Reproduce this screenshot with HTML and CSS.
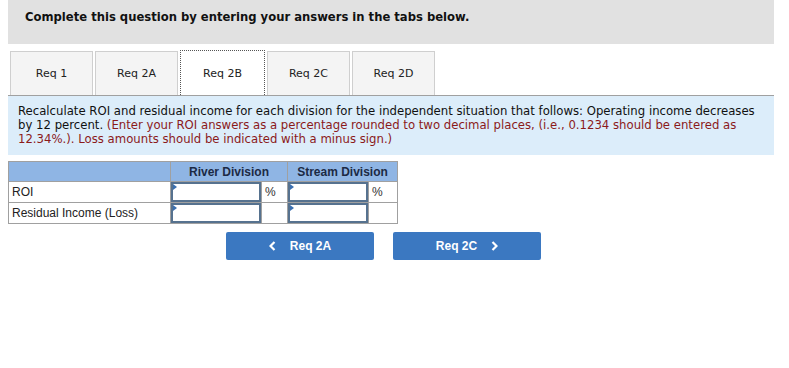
FILE: index.html
```html
<!DOCTYPE html>
<html lang="en">
<head>
    <meta charset="UTF-8">
    <meta name="viewport" content="width=device-width, initial-scale=1.0">
    <title>Req 2B</title>
    <link rel="stylesheet" href="styles.css">
</head>
<body>

    <!-- Question header -->
    <div class="question-header">Complete this question by entering your answers in the tabs below.</div>

    <!-- Requirement tabs -->
    <div class="tabs">
        <div class="tab">Req 1</div>
        <div class="tab">Req 2A</div>
        <div class="tab active">Req 2B</div>
        <div class="tab">Req 2C</div>
        <div class="tab">Req 2D</div>
    </div>

    <!-- Instructions -->
    <div class="instructions">
        Recalculate ROI and residual income for each division for the independent situation that follows: Operating income decreases by 12 percent. <span class="note">(Enter your ROI answers as a percentage rounded to two decimal places, (i.e., 0.1234 should be entered as 12.34%.). Loss amounts should be indicated with a minus sign.)</span>
    </div>

    <!-- Answer table -->
    <table class="answer-table">
        <tr class="head">
            <th class="label-col"></th>
            <th colspan="2">River Division</th>
            <th colspan="2">Stream Division</th>
        </tr>
        <tr>
            <td class="label-col">ROI</td>
            <td class="input-cell river"><input type="text"></td>
            <td class="unit">%</td>
            <td class="input-cell stream"><input type="text"></td>
            <td class="unit last">%</td>
        </tr>
        <tr>
            <td class="label-col">Residual Income (Loss)</td>
            <td class="input-cell river"><input type="text"></td>
            <td class="unit"></td>
            <td class="input-cell stream"><input type="text"></td>
            <td class="unit last"></td>
        </tr>
    </table>

    <!-- Navigation buttons -->
    <div class="nav-buttons">
        <a href="#" class="nav-btn">
            <svg class="chev" width="7" height="10" viewBox="0 0 7 10"><polyline points="5.5,1 1.5,5 5.5,9" fill="none" stroke="#fff" stroke-width="2.2"/></svg>
            Req 2A
        </a>
        <a href="#" class="nav-btn">
            Req 2C
            <svg class="chev" width="7" height="10" viewBox="0 0 7 10"><polyline points="1.5,1 5.5,5 1.5,9" fill="none" stroke="#fff" stroke-width="2.2"/></svg>
        </a>
    </div>

</body>
</html>
```

FILE: styles.css
```css
/* Reset */
* {
    margin: 0;
    padding: 0;
    box-sizing: border-box;
}

body {
    margin: 0 8px;
    width: 766px;
    font-family: 'DejaVu Sans', Verdana, sans-serif;
    background: #ffffff;
    color: #000000;
}

/* Gray header box */
.question-header {
    height: 44px;
    background: #e1e1e1;
    padding: 10px 0 0 17px;
    font-size: 11.6px;
    font-weight: bold;
    color: #111;
}

/* Tabs */
.tabs {
    display: flex;
    gap: 2px;
    margin-top: 7px;
    padding-left: 2px;
}

.tab {
    width: 83px;
    height: 44px;
    background: #f4f4f4;
    border: 1px solid #cfcfcf;
    border-bottom: none;
    display: flex;
    justify-content: center;
    align-items: center;
    font-size: 11px;
    color: #222;
}

.tab.active {
    width: 85px;
    margin: -1px 0 0;
    height: 45px;
    background: #ffffff;
    border: 1px dotted #555;
    border-bottom: none;
}

/* Instruction box */
.instructions {
    background: #dcedfa;
    border-top: 1px solid #a0a0a0;
    height: 60px;
    padding: 8px 10px 0;
    font-size: 11.7px;
    line-height: 14px;
    color: #111;
}

.note {
    color: #8b1a1a;
}

/* Answer table */
.answer-table {
    margin-top: 6px;
    border-collapse: collapse;
    font-family: 'Liberation Sans', Arial, sans-serif;
    font-size: 12px;
}

.answer-table th {
    height: 20px;
    background: #8fb5e4;
    border: 1px solid #a0a0a0;
    border-left: 1px solid #d6e4f5;
    font-weight: bold;
    color: #1c2a44;
    padding: 0;
}

.answer-table th.label-col {
    border-left: 1px solid #a0a0a0;
}

.answer-table td {
    border: 1px solid #a0a0a0;
    padding: 0;
}

.answer-table td.label-col {
    width: 162px;
    height: 20px;
    padding-left: 3px;
    color: #222;
}

.input-cell {
    position: relative;
}

.input-cell.river {
    width: 91px;
}

.input-cell.stream {
    width: 81px;
}

.input-cell input {
    display: block;
    width: 100%;
    height: 20px;
    border: 2px solid #56728f;
    background: #ffffff;
}

/* little blue marker in the corner of each input */
.input-cell::before {
    content: "";
    position: absolute;
    top: 2px;
    left: 2px;
    border-top: 3px solid transparent;
    border-bottom: 3px solid transparent;
    border-left: 4px solid #3a6fb0;
}

.unit {
    width: 26px;
    padding-left: 3px !important;
    color: #333;
}

.unit.last {
    width: 29px;
}

/* Navigation buttons */
.nav-buttons {
    display: flex;
    gap: 19px;
    margin-top: 8px;
    padding-left: 218px;
}

.nav-btn {
    width: 148px;
    height: 28px;
    background: #3b78c1;
    border-radius: 2px;
    color: #ffffff;
    text-decoration: none;
    font-family: 'Liberation Sans', Arial, sans-serif;
    font-weight: bold;
    font-size: 12px;
    display: flex;
    justify-content: center;
    align-items: center;
    gap: 14px;
}
```
